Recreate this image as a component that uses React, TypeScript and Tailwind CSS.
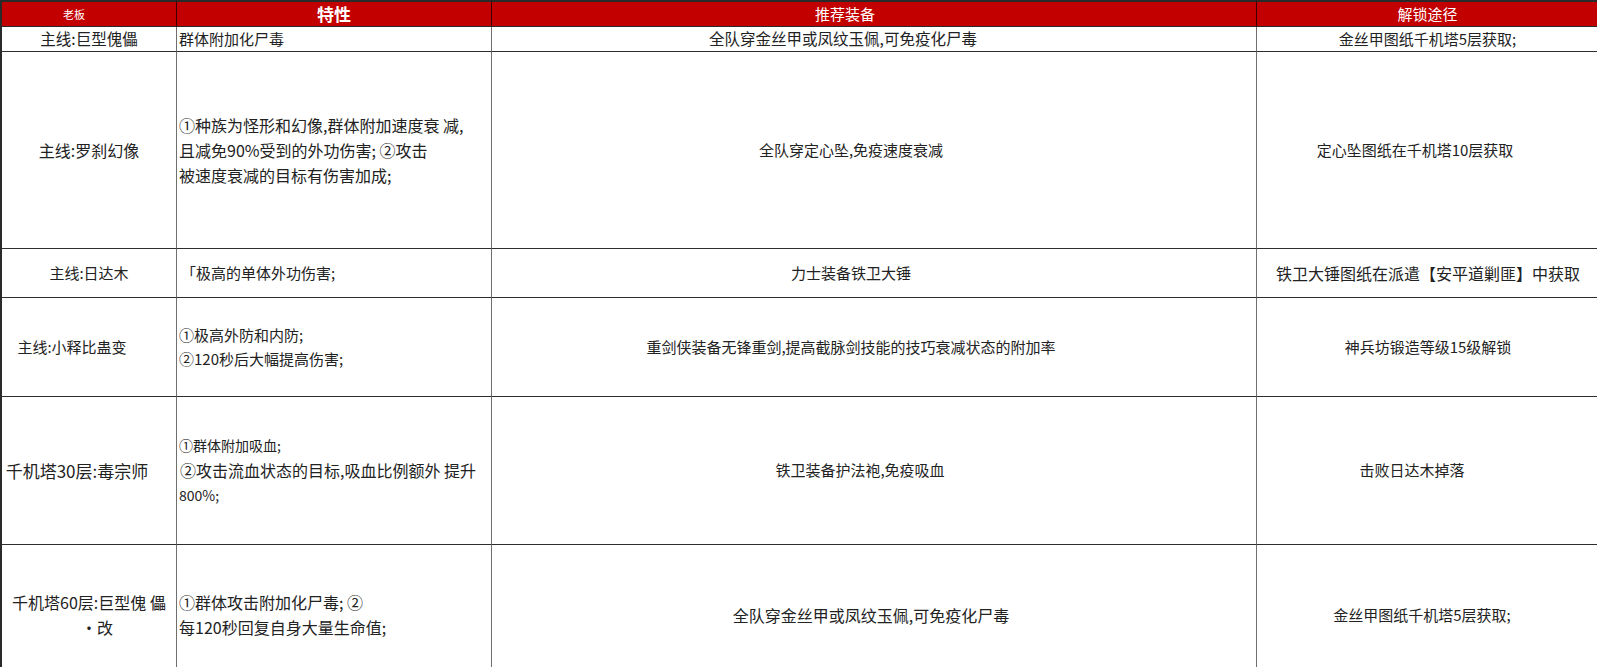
import React from "react";

const font = { fontFamily: '"Noto Sans CJK SC", "Noto Sans", sans-serif' };

function C({ className = "", children }: { className?: string; children?: React.ReactNode }) {
  return (
    <div className={"border-b border-b-[#2e2e2e] border-r border-r-[#6f6f6f] flex items-center min-w-0 overflow-hidden " + className}>
      {children}
    </div>
  );
}

function H({ className = "", children }: { className?: string; children?: React.ReactNode }) {
  return (
    <div className={"bg-[#c20000] border-t-2 border-t-[#2a2a2a] border-b border-b-[#2a2a2a] border-r border-r-[#3a0000] flex items-center justify-center text-white " + className}>
      {children}
    </div>
  );
}

export default function App() {
  return (
    <div className="w-[1597px] h-[667px] overflow-hidden bg-white text-[#222]" style={font}>
      <div className="grid grid-cols-[175px_315px_765px_342px] grid-rows-[27px_25px_197px_49px_99px_148px_140px] border-l-2 border-l-[#2a2a2a]">
        {/* header */}
        <H className="text-[11px] pr-[30px]">老板</H>
        <H className="text-[17px] font-bold">特性</H>
        <H className="text-[15px] pr-[58px]">推荐装备</H>
        <H className="text-[15px] border-r-[#2a2a2a]">解锁途径</H>

        {/* row 1 */}
        <C className="justify-center text-[15.5px]">主线:巨型傀儡</C>
        <C className="pl-[2px] text-[15px]">群体附加化尸毒</C>
        <C className="justify-center pr-[62px] text-[15.5px]">全队穿金丝甲或凤纹玉佩,可免疫化尸毒</C>
        <C className="justify-center text-[15px] border-r-[#2a2a2a]">金丝甲图纸千机塔5层获取;</C>

        {/* row 2 */}
        <C className="justify-center text-[16px]">主线:罗刹幻像</C>
        <C className="pl-[2px] text-[16px] leading-[25px]">
          <div className="whitespace-nowrap">
            <div>①种族为怪形和幻像,群体附加速度衰 减,</div>
            <div>且减免90%受到的外功伤害; ②攻击</div>
            <div>被速度衰减的目标有伤害加成;</div>
          </div>
        </C>
        <C className="justify-center pr-[46px] text-[15px]">全队穿定心坠,免疫速度衰减</C>
        <C className="justify-center pr-[26px] text-[15px] border-r-0">定心坠图纸在千机塔10层获取</C>

        {/* row 3 */}
        <C className="justify-center text-[15px]">主线:日达木</C>
        <C className="pl-[4px] text-[15px]">「极高的单体外功伤害;</C>
        <C className="justify-center pr-[46px] text-[15px]">力士装备铁卫大锤</C>
        <C className="justify-center text-[16px] border-r-0">铁卫大锤图纸在派遣【安平道剿匪】中获取</C>

        {/* row 4 */}
        <C className="justify-center pr-[34px] text-[15px]">主线:小释比蛊变</C>
        <C className="pl-[2px] text-[15px] leading-[24px]">
          <div className="whitespace-nowrap">
            <div>①极高外防和内防;</div>
            <div>②120秒后大幅提高伤害;</div>
          </div>
        </C>
        <C className="justify-center pr-[46px] text-[15px]">重剑侠装备无锋重剑,提高截脉剑技能的技巧衰减状态的附加率</C>
        <C className="justify-center text-[15px] border-r-0">神兵坊锻造等级15级解锁</C>

        {/* row 5 */}
        <C className="justify-center pr-[24px] text-[17px]">千机塔30层:毒宗师</C>
        <C className="pl-[2px] leading-[25px]">
          <div className="whitespace-nowrap">
            <div className="text-[14px]">①群体附加吸血;</div>
            <div className="text-[16px] pl-[1px]">②攻击流血状态的目标,吸血比例额外 提升</div>
            <div className="text-[14px]">800%;</div>
          </div>
        </C>
        <C className="justify-center pr-[28px] text-[15px]">铁卫装备护法袍,免疫吸血</C>
        <C className="justify-center pr-[32px] text-[15px] border-r-0">击败日达木掉落</C>

        {/* row 6 */}
        <C className="justify-center text-[16px] leading-[25px] border-b-0">
          <div className="text-center whitespace-nowrap">
            <div>千机塔60层:巨型傀 儡</div>
            <div className="pl-[16px]">·改</div>
          </div>
        </C>
        <C className="pl-[2px] text-[16px] leading-[25px] border-b-0">
          <div className="whitespace-nowrap">
            <div>①群体攻击附加化尸毒; ②</div>
            <div>每120秒回复自身大量生命值;</div>
          </div>
        </C>
        <C className="justify-center pr-[6px] text-[16px] border-b-0">全队穿金丝甲或凤纹玉佩,可免疫化尸毒</C>
        <C className="justify-center pr-[12px] text-[15px] border-r-0 border-b-0">金丝甲图纸千机塔5层获取;</C>
      </div>
    </div>
  );
}
